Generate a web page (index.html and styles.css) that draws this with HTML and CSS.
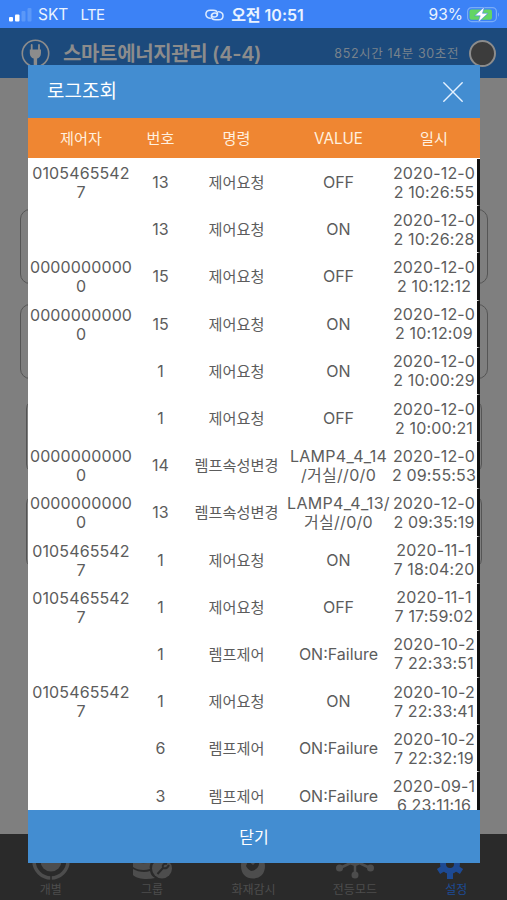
FILE: index.html
```html
<!DOCTYPE html>
<html lang="ko">
<head>
    <meta charset="UTF-8">
    <meta name="viewport" content="width=device-width, initial-scale=1.0">
    <title>스마트에너지관리</title>
    <link rel="stylesheet" href="styles.css">
</head>
<body>
    <div class="app">
        <div class="status-bar">
            <div class="status-left">
                <svg class="signal" width="23" height="15" viewBox="0 0 23 15">
                    <rect x="0" y="10" width="4" height="4.5" rx="1" fill="#fff"/>
                    <rect x="6" y="7.5" width="4.5" height="7" rx="1" fill="#fff"/>
                    <rect x="12.5" y="4" width="4" height="10.5" rx="1" fill="#5b98f8"/>
                    <rect x="18.5" y="1" width="4" height="13.5" rx="1" fill="#5b98f8"/>
                </svg>
                <span class="carrier">SKT</span>
                <span class="network">LTE</span>
            </div>
            <div class="status-center">
                <svg width="19" height="12" viewBox="0 0 19 12" fill="none" stroke="#dcebff" stroke-width="1.5" stroke-linecap="round">
                    <path d="M5.2 9.3C2.5 9 .9 7.5.9 5.3.9 2.9 2.7 1.2 5.3 1.2h2.9c2.7 0 4.3 1.5 4.3 3.5 0 2.1-1.7 3.3-3.5 3.3-1.5 0-2.5-.8-2.5-2"/>
                    <path d="M13.6 2.7C16.4 3 18 4.5 18 6.7c0 2.4-1.8 4.1-4.4 4.1h-2.9c-2.7 0-4.3-1.5-4.3-3.5 0-2.1 1.7-3.3 3.5-3.3 1.5 0 2.5.8 2.5 2"/>
                </svg>
                <span class="clock">오전 10:51</span>
            </div>
            <div class="status-right">
                <span class="percent">93%</span>
                <svg width="33" height="18" viewBox="0 0 33 18">
                    <rect x=".6" y="1.6" width="28.8" height="14" rx="4" fill="none" stroke="#79acf8" stroke-width="1.2"/>
                    <path d="M31 6.5c1.3.5 1.3 3.7 0 4.2z" fill="#79acf8"/>
                    <rect x="2.5" y="3.5" width="22.5" height="10.2" rx="2" fill="#63d564"/>
                    <path d="M17.5.8 7.7 9.8h5.5L11 16.5l10-9.2h-5.5z" fill="#fff" stroke="#4b86ea" stroke-width=".6"/>
                </svg>
            </div>
        </div>

        <div class="app-header">
            <svg class="plug" width="29" height="29" viewBox="0 0 29 29">
                <circle cx="14.5" cy="14.5" r="13.2" fill="none" stroke="#8c8c8c" stroke-width="1.6"/>
                <path d="M10.7 6v5M18 6v5" stroke="#8c8c8c" stroke-width="1.8" stroke-linecap="round"/>
                <path d="M8.8 10.5h11.2V14c0 3.2-1.8 5-3.9 5.6V28h-3.4v-8.4C10.6 19 8.8 17.2 8.8 14z" fill="#8c8c8c"/>
            </svg>
            <h1>스마트에너지관리 (4-4)</h1>
            <span class="elapsed">852시간 14분 30초전</span>
            <span class="lamp"></span>
        </div>

        <div class="content">
            <div class="card"></div>
            <div class="card"></div>
            <div class="card narrow"></div>
            <div class="card narrow"></div>
        </div>

        <div class="tab-bar">
            <div class="tab">
                <svg width="40" height="40" viewBox="0 0 40 40">
                    <circle cx="20" cy="20" r="17" fill="none" stroke="#4d4d4d" stroke-width="3.5"/>
                    <circle cx="20" cy="20" r="10.5" fill="#4d4d4d"/>
                    <path d="M20 33v6" stroke="#2a2a2a" stroke-width="1.5"/>
                </svg>
                <span>개별</span>
            </div>
            <div class="tab">
                <svg width="40" height="40" viewBox="0 0 40 40">
                    <path d="M1 19c5 4 12 4 18 2-1 3-2 5-1 7-6 2-13 1-17-2zM1 28c5 3 12 4 17 2 1 4 2 5 5 7-8 2-18 1-22-3z" fill="#4d4d4d"/>
                    <circle cx="30" cy="27.5" r="10" fill="#4d4d4d"/>
                    <path d="M25.5 33l5.500-6m4-4c-3-1-5 1-4 4 3 1 5-1 6-3" stroke="#2a2a2a" stroke-width="2" fill="none"/>
                </svg>
                <span>그룹</span>
            </div>
            <div class="tab">
                <svg width="40" height="40" viewBox="0 0 40 40">
                    <path d="M20 3c3 8 12 12 12 22 0 8-5 12.5-12 12.5S8 33 8 25c0-7 4-9 5-14l5 6z" fill="#4d4d4d"/>
                    <path d="M15 20l5 4 5-5c3 6-1 10-7 11-2-1-4-3-5-5z" fill="#2a2a2a"/>
                </svg>
                <span>화재감시</span>
            </div>
            <div class="tab">
                <svg width="40" height="40" viewBox="0 0 40 40">
                    <path d="M20 20v13M20 20 5 27M20 20l15 7M20 22 9 11M20 22l11-11" stroke="#4d4d4d" stroke-width="2.5"/>
                    <circle cx="20" cy="19" r="6" fill="#4d4d4d"/>
                    <circle cx="20" cy="34" r="3.5" fill="#4d4d4d"/>
                    <circle cx="4.5" cy="27" r="3.5" fill="#4d4d4d"/>
                    <circle cx="35.5" cy="27" r="3.5" fill="#4d4d4d"/>
                </svg>
                <span>전등모드</span>
            </div>
            <div class="tab active">
                <svg width="40" height="40" viewBox="0 0 40 40">
                    <circle cx="14" cy="23" r="7" fill="none" stroke="#1d4a94" stroke-width="6"/>
                    <path d="M14 30v8M8 27l-5.5 3.5M20 27l5.5 3.5M14 16V8M8 19l-5.5-3.5M20 19l5.5-3.5" stroke="#1d4a94" stroke-width="6"/>
                </svg>
                <span>설정</span>
            </div>
        </div>
    </div>

    <div class="modal">
        <div class="modal-header">
            <h2>로그조회</h2>
            <svg width="20" height="20" viewBox="0 0 20 20" stroke="#e4f1ff" stroke-width="1.4" stroke-linecap="round">
                <path d="M.8.8l18.4 18.4M19.2.8.8 19.2"/>
            </svg>
        </div>
        <div class="log-row log-head">
            <span>제어자</span><span>번호</span><span>명령</span><span>VALUE</span><span>일시</span>
        </div>
        <div class="log-list">
            <div class="log-row"><span class="user">01054655427</span><span>13</span><span class="command">제어요청</span><span>OFF</span><span class="date">2020-12-0<br>2 10:26:55</span></div>
            <div class="log-row"><span class="user"></span><span>13</span><span class="command">제어요청</span><span>ON</span><span class="date">2020-12-0<br>2 10:26:28</span></div>
            <div class="log-row"><span class="user">00000000000</span><span>15</span><span class="command">제어요청</span><span>OFF</span><span class="date">2020-12-0<br>2 10:12:12</span></div>
            <div class="log-row"><span class="user">00000000000</span><span>15</span><span class="command">제어요청</span><span>ON</span><span class="date">2020-12-0<br>2 10:12:09</span></div>
            <div class="log-row"><span class="user"></span><span>1</span><span class="command">제어요청</span><span>ON</span><span class="date">2020-12-0<br>2 10:00:29</span></div>
            <div class="log-row"><span class="user"></span><span>1</span><span class="command">제어요청</span><span>OFF</span><span class="date">2020-12-0<br>2 10:00:21</span></div>
            <div class="log-row"><span class="user">00000000000</span><span>14</span><span class="command">렘프속성변경</span><span class="lamp-value">LAMP4_4_14<br>/거실//0/0</span><span class="date">2020-12-0<br>2 09:55:53</span></div>
            <div class="log-row"><span class="user">00000000000</span><span>13</span><span class="command">렘프속성변경</span><span class="lamp-value">LAMP4_4_13/<br>거실//0/0</span><span class="date">2020-12-0<br>2 09:35:19</span></div>
            <div class="log-row"><span class="user">01054655427</span><span>1</span><span class="command">제어요청</span><span>ON</span><span class="date">2020-11-1<br>7 18:04:20</span></div>
            <div class="log-row"><span class="user">01054655427</span><span>1</span><span class="command">제어요청</span><span>OFF</span><span class="date">2020-11-1<br>7 17:59:02</span></div>
            <div class="log-row"><span class="user"></span><span>1</span><span class="command">렘프제어</span><span>ON:Failure</span><span class="date">2020-10-2<br>7 22:33:51</span></div>
            <div class="log-row"><span class="user">01054655427</span><span>1</span><span class="command">제어요청</span><span>ON</span><span class="date">2020-10-2<br>7 22:33:41</span></div>
            <div class="log-row"><span class="user"></span><span>6</span><span class="command">렘프제어</span><span>ON:Failure</span><span class="date">2020-10-2<br>7 22:32:19</span></div>
            <div class="log-row"><span class="user"></span><span>3</span><span class="command">렘프제어</span><span>ON:Failure</span><span class="date">2020-09-1<br>6 23:11:16</span></div>
        </div>
        <div class="modal-close">닫기</div>
    </div>
</body>
</html>
```
FILE: styles.css
```css
* {
    box-sizing: border-box;
}

body {
    margin: 0;
    font-family: Inter, "Noto Sans CJK KR", sans-serif;
    background: #7f7f7f;
    overflow: hidden;
}

h1, h2 {
    margin: 0;
}

.app {
    height: 900px;
    display: flex;
    flex-direction: column;
}

.status-bar {
    height: 28px;
    flex: none;
    display: grid;
    grid-template-columns: 1fr auto 1fr;
    align-items: center;
    padding: 2px 7px 0 9px;
    background: #3c82f6;
    color: #eaf3ff;
    font-size: 16px;
    line-height: 24px;
}

.status-left, .status-center, .status-right {
    display: flex;
    align-items: center;
}

.signal {
    margin-top: -1px;
}

.carrier {
    margin-left: 6px;
    font-size: 15.5px;
}

.network {
    margin-left: 12px;
    font-size: 15px;
    letter-spacing: -0.5px;
}

.status-center {
    gap: 7px;
}

.clock {
    font-weight: 600;
    font-size: 16px;
}

.status-right {
    justify-content: flex-end;
    gap: 4px;
}

.percent {
    font-size: 15.5px;
}

.app-header {
    height: 50px;
    flex: none;
    display: flex;
    align-items: center;
    padding: 0 11px 0 21px;
    background: #1c4a7c;
    color: #8c8c8c;
}

.app-header h1 {
    margin-left: 13px;
    padding-top: 1px;
    font-size: 20px;
    font-weight: 600;
    line-height: 28px;
    letter-spacing: -0.35px;
    white-space: nowrap;
}

.elapsed {
    margin-left: auto;
    margin-bottom: 2px;
    font-size: 12.5px;
    letter-spacing: 0.6px;
    white-space: nowrap;
    color: #78828c;
}

.lamp {
    width: 27px;
    height: 27px;
    margin-left: 10px;
    flex: none;
    border: 2.5px solid #8c8c8c;
    border-radius: 50%;
    background: #3c3c3c;
}

.content {
    flex: 1;
    padding: 131px 19px 0 20px;
}

.card {
    height: 75px;
    margin-bottom: 20px;
    border: 1px solid #555;
    border-radius: 10px;
}

.card.narrow {
    margin-left: 6px;
    margin-right: 6px;
}

.tab-bar {
    height: 66px;
    flex: none;
    display: grid;
    grid-template-columns: repeat(5, 1fr);
    padding-top: 7px;
    background: #2a2a2a;
}

.tab {
    display: flex;
    flex-direction: column;
    align-items: center;
    color: #4d4d4d;
    font-size: 12px;
    line-height: 18px;
}

.tab.active {
    color: #1d4a94;
}

/* dialog over the settings page */
.modal {
    position: absolute;
    left: 28px;
    top: 65px;
    width: 452px;
    height: 798px;
    display: flex;
    flex-direction: column;
    background: #fff;
}

.modal-header {
    height: 53px;
    flex: none;
    display: flex;
    align-items: center;
    justify-content: space-between;
    padding: 0 17px 0 19px;
    background: #438dd1;
}

.modal-header h2 {
    color: #fff;
    font-size: 19px;
    font-weight: 400;
    line-height: 28px;
}

.log-row {
    height: 47.2px;
    display: grid;
    grid-template-columns: 106px 53px 99px 105px 86px;
    align-items: center;
    text-align: center;
    color: #5c5c5c;
    font-size: 16px;
    line-height: 19px;
    white-space: nowrap;
}

.log-head {
    height: 40px;
    flex: none;
    background: #ef8632;
    color: #fff0df;
    font-size: 15.2px;
}

.log-list {
    flex: 1;
    overflow: hidden;
    padding-top: 1px;
}

.log-list .log-row {
    padding-top: 1px;
    border-right: 3px solid #111;
    border-bottom: 1px solid #fff;
}

.log-list .user {
    align-self: start;
    padding: 4px 1px 0;
    letter-spacing: 0.12px;
    white-space: normal;
    word-break: break-all;
}

.log-list .command {
    font-size: 15.2px;
}

.log-list .lamp-value {
    letter-spacing: 0.3px;
}

.log-list .date {
    letter-spacing: 0.15px;
}

.modal-close {
    height: 53px;
    flex: none;
    display: flex;
    align-items: center;
    justify-content: center;
    padding-bottom: 1px;
    background: #438dd1;
    color: #fff;
    font-size: 16px;
}
```
